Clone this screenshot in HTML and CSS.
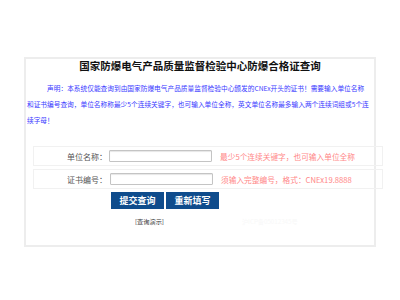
FILE: index.html
```html
<!DOCTYPE html>
<html lang="zh-CN">
<head>
    <meta charset="UTF-8">
    <title>国家防爆电气产品质量监督检验中心防爆合格证查询</title>
    <link rel="stylesheet" href="styles.css">
</head>
<body>
    <div class="query-box">
        <h1 class="title">国家防爆电气产品质量监督检验中心防爆合格证查询</h1>
        <p class="notice">声明：本系统仅能查询到由国家防爆电气产品质量监督检验中心颁发的CNEx开头的证书！需要输入单位名称和证书编号查询，单位名称称最少5个连续关键字，也可输入单位全称，英文单位名称最多输入两个连续词组或5个连续字母！</p>

        <form class="query-form">
            <div class="form-row">
                <label class="form-label" for="company">单位名称：</label>
                <input class="form-input" type="text" id="company">
                <span class="form-hint">最少5个连续关键字，也可输入单位全称</span>
            </div>
            <div class="form-row">
                <label class="form-label" for="certNo">证书编号：</label>
                <input class="form-input form-input-shift" type="text" id="certNo">
                <span class="form-hint">须输入完整编号，格式：CNEx19.8888</span>
            </div>
            <div class="form-actions">
                <button class="btn" type="submit">提交查询</button>
                <button class="btn" type="reset">重新填写</button>
            </div>
        </form>

        <div class="footer-line">
            <a class="demo-link" href="#">[查询演示]</a>
            <span class="faint">沪ICP备05012345号</span>
        </div>
    </div>
</body>
</html>
```

FILE: styles.css
```css
body {
    margin: 0;
    background: #fff;
    font-family: "Noto Sans CJK SC", "Liberation Sans", sans-serif;
}
.query-box {
    width: 348px;
    height: 186px;
    margin: 57px auto 0;
    border: 2px solid #ededed;
    padding: 0;
}
.title {
    margin: 0;
    font-size: 10.5px;
    line-height: 14px;
    font-weight: bold;
    text-align: center;
    color: #111;
}
.notice {
    margin: 7px 0 0;
    padding: 0 4px 0 1px;
    font-size: 6.7px;
    line-height: 16px;
    text-indent: 3em;
    color: #3a3aff;
}
.query-form {
    margin: 18px 0 0 7px;
    width: 350px;
}
.form-row {
    display: flex;
    align-items: center;
    height: 18px;
    margin-bottom: 3px;
    border: 1px solid #f1f1f1;
}
.form-label {
    width: 73px;
    text-align: right;
    font-size: 8px;
    color: #555;
}
.form-input {
    box-sizing: border-box;
    width: 103px;
    height: 12px;
    margin: 0 0 0 2px;
    padding: 0;
    border: 1px solid #c4c4c4;
    border-radius: 1px;
    box-shadow: inset 0 1px 1px #e6e6e6;
}
.form-input-shift {
    margin-left: 3px;
}
.form-hint {
    margin-left: 8px;
    font-size: 7.7px;
    color: #ff8888;
}
.form-actions {
    display: flex;
    gap: 2px;
    margin-left: 78px;
}
.btn {
    width: 53px;
    height: 17px;
    padding: 0;
    border: none;
    background: #0f4c8c;
    color: #fff;
    font-family: inherit;
    font-size: 9px;
    font-weight: bold;
}
.footer-line {
    display: flex;
    margin-top: 8px;
    padding-left: 109px;
    font-size: 6.2px;
    line-height: 10px;
}
.demo-link {
    color: #333;
    text-decoration: none;
}
.faint {
    margin-left: 78px;
    color: #f8f8f8;
}
```
